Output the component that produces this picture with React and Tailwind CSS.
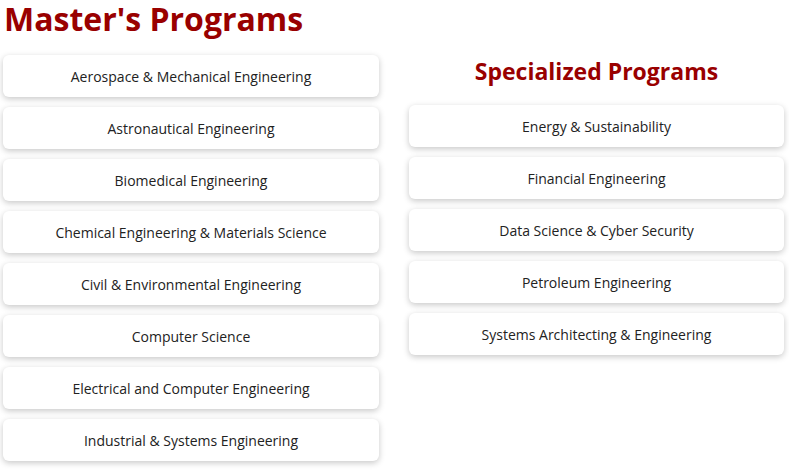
const masters = [
  "Aerospace & Mechanical Engineering",
  "Astronautical Engineering",
  "Biomedical Engineering",
  "Chemical Engineering & Materials Science",
  "Civil & Environmental Engineering",
  "Computer Science",
  "Electrical and Computer Engineering",
  "Industrial & Systems Engineering",
];

const specialized = [
  "Energy & Sustainability",
  "Financial Engineering",
  "Data Science & Cyber Security",
  "Petroleum Engineering",
  "Systems Architecting & Engineering",
];

const ProgramCard = ({ label }) => (
  <div className="h-[42px] flex items-center justify-center bg-white rounded-md shadow-[0_2px_6px_rgba(0,0,0,0.22)] text-[14px] text-[#222]">
    {label}
  </div>
);

export default function App() {
  return (
    <div className="w-[789px] h-[472px] overflow-hidden bg-white font-['Open_Sans',sans-serif]">
      <h1 className="pl-[4px] text-[32px] leading-[38px] font-bold text-[#990000]">
        Master's Programs
      </h1>
      <div className="flex gap-[30px] px-[3px] mt-[17px]">
        <div className="w-[376px] flex flex-col gap-[10px]">
          {masters.map((m) => (
            <ProgramCard key={m} label={m} />
          ))}
        </div>
        <div className="w-[375px] flex flex-col">
          <h2 className="text-center text-[23px] leading-[32px] font-bold text-[#990000] mb-[18px]">
            Specialized Programs
          </h2>
          <div className="flex flex-col gap-[10px]">
            {specialized.map((s) => (
              <ProgramCard key={s} label={s} />
            ))}
          </div>
        </div>
      </div>
    </div>
  );
}
